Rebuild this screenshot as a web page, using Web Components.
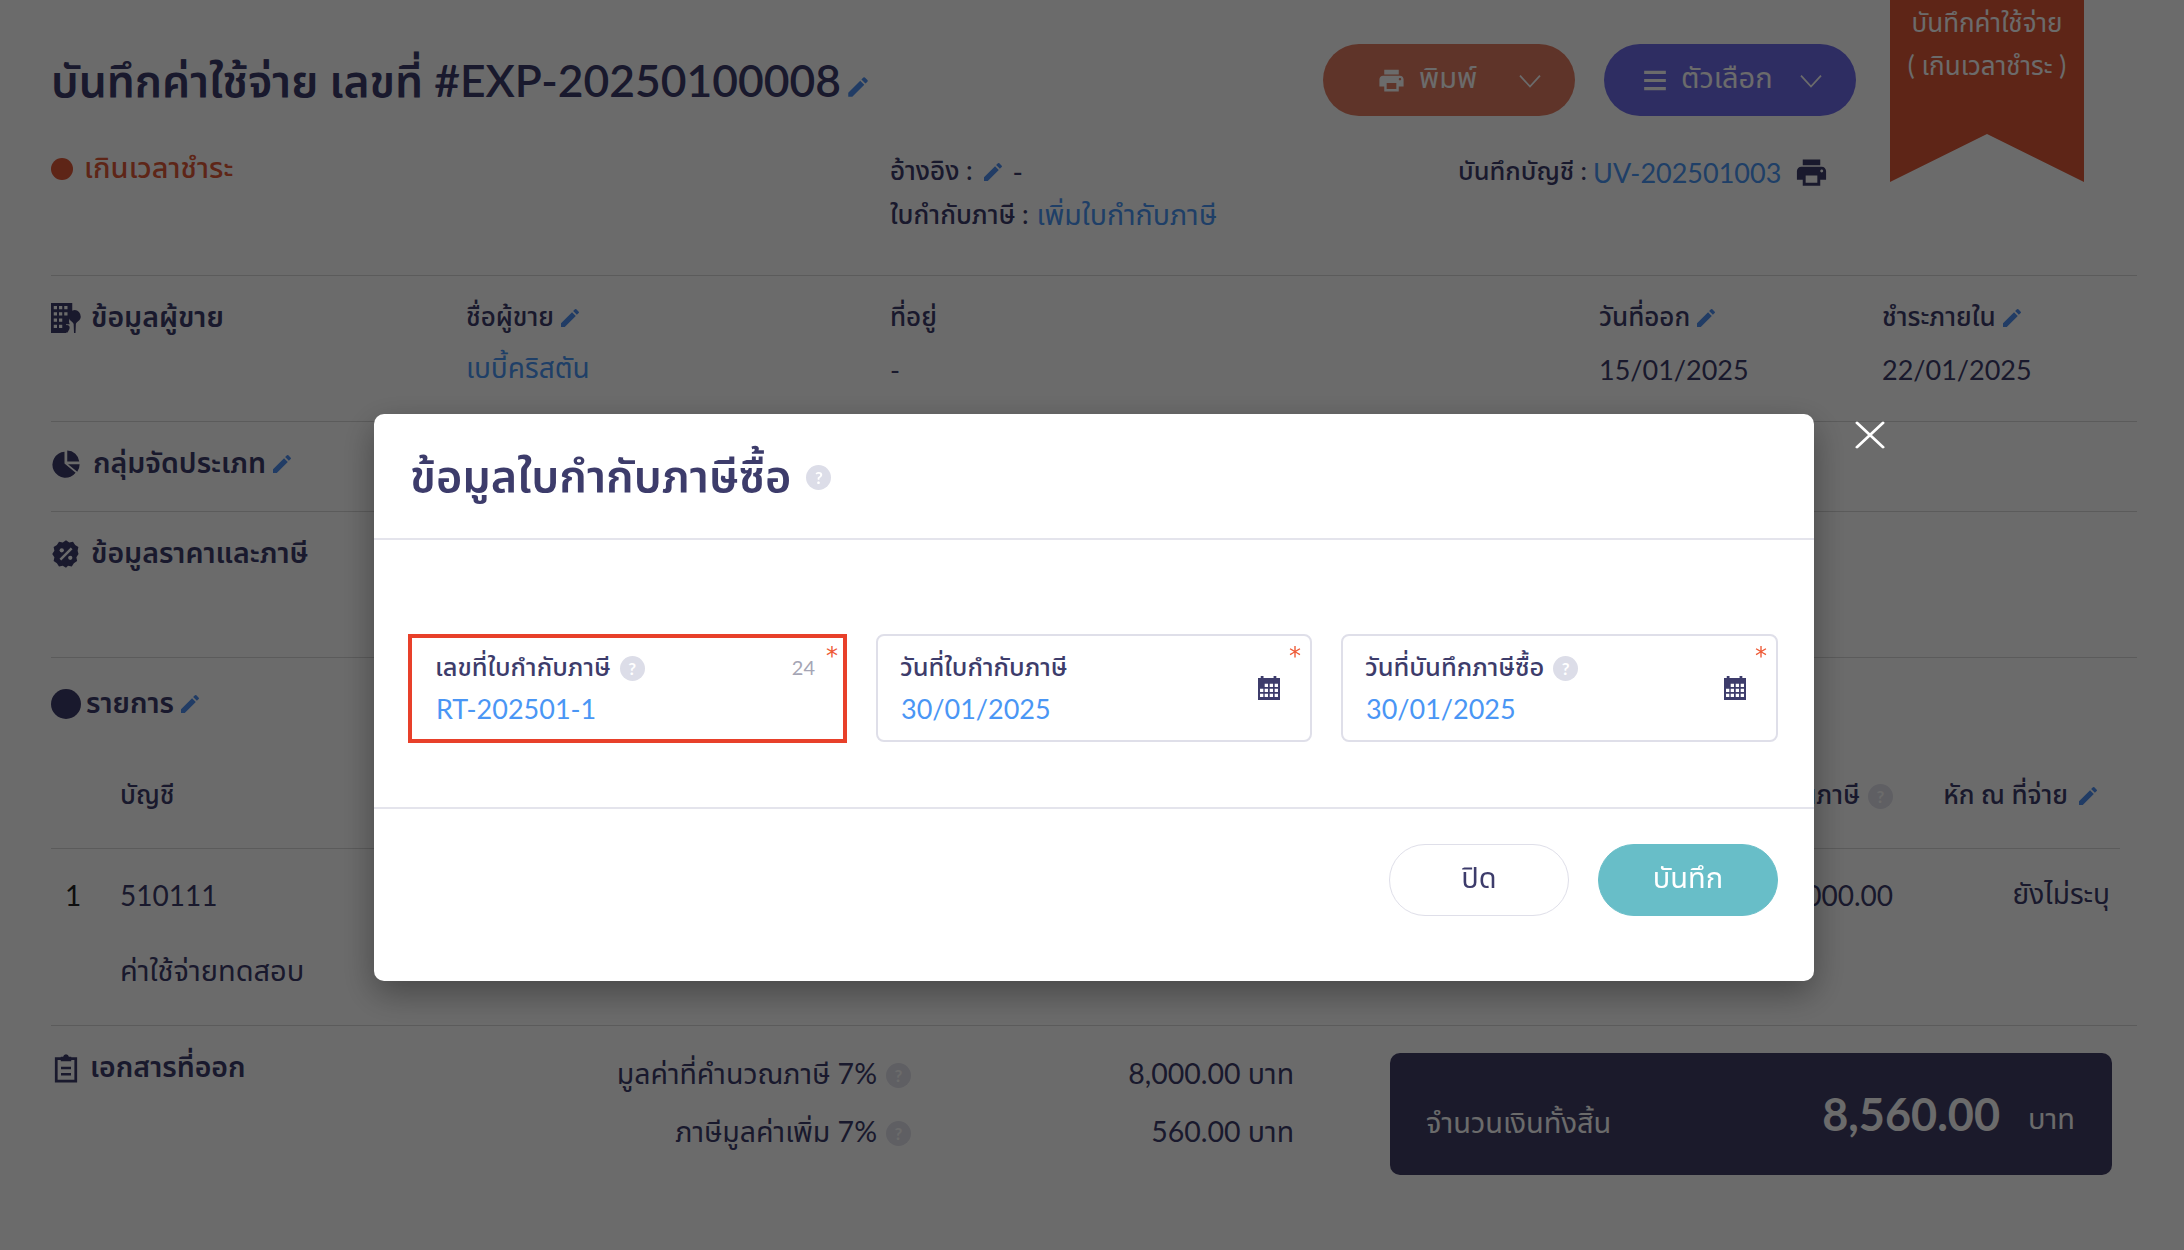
<!DOCTYPE html>
<html lang="th">
<head>
<meta charset="utf-8">
<title>บันทึกค่าใช้จ่าย</title>
<style>
  html, body { margin: 0; height: 100%; }
  body {
    background: #fff;
    color: #3d3c6b;
    font-family: Lato, "Noto Sans Thai", sans-serif;
    font-size: 28px;
    overflow: hidden;
  }
</style>
</head>
<body>
<expense-page></expense-page>
<tax-modal></tax-modal>

<script>
const ICONS = {
  pencil: '<path fill="currentColor" d="M3 17.25V21h3.75L17.8 9.94l-3.75-3.75L3 17.25zM20.7 7.04a1 1 0 0 0 0-1.41l-2.34-2.34a1 1 0 0 0-1.41 0l-1.83 1.83 3.75 3.75 1.83-1.83z"/>',
  print: '<path fill="currentColor" d="M19 8H5c-1.66 0-3 1.34-3 3v6h4v4h12v-4h4v-6c0-1.66-1.34-3-3-3zm-3 11H8v-5h8v5zm3-7c-.55 0-1-.45-1-1s.45-1 1-1 1 .45 1 1-.45 1-1 1zm-1-9H6v4h12V3z"/>',
  bars: '<path fill="currentColor" d="M2 4h20v2.6H2zM2 10.7h20v2.6H2zM2 17.4h20V20H2z"/>',
  chevron: '<path fill="none" stroke="currentColor" stroke-width="1.4" d="M4 8l8 9 8-9"/>',
  calendar: '<path fill="currentColor" d="M0 2h24v22H0zM3 0h3v2H3zM17 0h3v2h-3z"/><path fill="#fff" d="M7.3 7.7h3.6v3.4H7.3zM12.8 7.7h3.6v3.4h-3.6zM18.2 7.7h3.6v3.4h-3.6zM2.2 12.7h3.6v3.4H2.2zM7.3 12.7h3.6v3.4H7.3zM12.8 12.7h3.6v3.4h-3.6zM18.2 12.7h3.6v3.4h-3.6zM2.2 17.7h3.6v3.4H2.2zM7.3 17.7h3.6v3.4H7.3zM12.8 17.7h3.6v3.4h-3.6zM18.2 17.7h3.6v3.4h-3.6z"/>',
  pie: '<path fill="currentColor" d="M10.8 2.2A10.4 10.4 0 1 0 19.7 19l-8.9-7.4z"/><path fill="currentColor" d="M13 1.2V10h9.6A9.9 9.9 0 0 0 13 1.2zM13.6 12.2l7.4 6a10 10 0 0 0 1.9-6z"/>',
  percent: '<path fill="currentColor" d="M12 1l2.6 1.7 3-.6 1.7 2.6 2.6 1.7-.6 3L22 12l-1.7 2.6.6 3-2.6 1.7-1.7 2.6-3-.6L12 23l-2.6-1.7-3 .6-1.7-2.6-2.6-1.7.6-3L1 12l1.7-2.6-.6-3 2.6-1.7 1.7-2.6 3 .6z"/><path fill="none" stroke="#fff" stroke-width="2" d="M16.5 7.5l-9 9"/><circle cx="8.6" cy="9" r="1.7" fill="#fff"/><circle cx="15.4" cy="15" r="1.7" fill="#fff"/>',
  vendor: '<path fill="currentColor" d="M0 0h17v9.500a6 6 0 0 0-2 7.500H12v7H0z"/><path fill="#fff" d="M2.200 2.400h2.600V5H2.200zM6.400 2.400H9V5H6.400zM10.600 2.400h2.600V5h-2.600zM2.200 7.400h2.600V10H2.200zM6.400 7.400H9V10H6.400zM10.600 7.400h2.600V10h-2.600zM2.200 12.400h2.600V15H2.200zM6.400 12.400H9V15H6.400zM2.200 17.400h2.600V20H2.200zM6.400 17.400H9V20H6.400z"/><path fill="currentColor" d="M19 5.500a4.800 5.500 0 0 0-4.800 5.500c0 3 3.600 4.200 3.900 5.800l.3 7.200h1.200l.3-7.200c.3-1.600 3.900-2.800 3.900-5.800A4.800 5.500 0 0 0 19 5.500z"/><path fill="currentColor" d="M12.700 17.500a2.200 2.200 0 0 0-2.200 2.200c0 1.500 2.200 4.300 2.200 4.300s2.200-2.800 2.200-4.300a2.200 2.200 0 0 0-2.200-2.200z"/>',
  clipboard: '<path fill="none" stroke="currentColor" stroke-width="2.200" d="M8 4.500H4.200v18h15.600v-18H16"/><path fill="currentColor" d="M12 1a2.400 2.400 0 0 0-2.300 2H7.800v3.600h8.400V3h-1.900A2.400 2.400 0 0 0 12 1zM8 11h8v2H8zM8 16h8v2H8z"/>',
  dot: '<circle cx="12" cy="12" r="12" fill="currentColor"/>',
  close: '<path fill="none" stroke="currentColor" stroke-width="3" stroke-linecap="round" d="M2 2l26 26M28 2L2 28"/>'
};

class UiIcon extends HTMLElement {
  connectedCallback() {
    const name = this.getAttribute('name');
    const box = name === 'close' ? '0 0 30 30' : '0 0 24 24';
    this.attachShadow({mode: 'open'}).innerHTML = `
      <style>
        :host { display: inline-flex; flex: none; }
        svg { width: 100%; height: 100%; display: block; }
      </style>
      <svg viewBox="${box}" preserveAspectRatio="none">${ICONS[name]}</svg>`;
  }
}
customElements.define('ui-icon', UiIcon);

class EditPen extends HTMLElement {
  constructor() {
    super();
    this.attachShadow({mode: 'open'}).innerHTML = `
      <style>
        :host { display: inline-flex; width: 24px; height: 24px; color: #4f90f0; margin-left: 4px; flex: none; }
        ui-icon { width: 100%; height: 100%; }
      </style>
      <ui-icon name="pencil"></ui-icon>`;
  }
}
customElements.define('edit-pen', EditPen);

class HelpDot extends HTMLElement {
  constructor() {
    super();
    this.attachShadow({mode: 'open'}).innerHTML = `
      <style>
        :host {
          display: inline-flex; align-items: center; justify-content: center;
          width: 25px; height: 25px; border-radius: 50%; flex: none;
          background: var(--dot-bg, #dcdde8); color: #fff; font-size: 17px; font-weight: 700; line-height: 1;
        }
      </style>?`;
  }
}
customElements.define('help-dot', HelpDot);

class PillButton extends HTMLElement {
  constructor() {
    super();
    this.attachShadow({mode: 'open'}).innerHTML = `
      <style>
        :host {
          display: inline-flex; align-items: center; box-sizing: border-box;
          width: 252px; height: 72px; border-radius: 36px; color: #fff; font-size: 29px;
          padding: 0 30px 0 var(--lead-pad, 54px); gap: 13px;
        }
        .caret { width: 30px; height: 29px; margin-left: auto; }
        .lead { width: var(--lead-size, 29px); height: 29px; }
        .text { padding-bottom: 2px; }
      </style>
      <ui-icon class="lead" name="${this.getAttribute('icon')}"></ui-icon>
      <span class="text"><slot></slot></span>
      <ui-icon class="caret" name="chevron"></ui-icon>`;
  }
}
customElements.define('pill-button', PillButton);

class ExpenseRibbon extends HTMLElement {
  constructor() {
    super();
    this.attachShadow({mode: 'open'}).innerHTML = `
      <style>
        :host {
          position: absolute; top: 0; left: 1890px; width: 194px; height: 182px; padding-top: 1px; box-sizing: border-box;
          background: #e05837; color: #fff; font-size: 26px; line-height: 43px; text-align: center; white-space: nowrap;
          clip-path: polygon(0 0, 100% 0, 100% 100%, 50% 134px, 0 100%);
        }
      </style>
      <div>บันทึกค่าใช้จ่าย</div>
      <div>( เกินเวลาชำระ )</div>`;
  }
}
customElements.define('expense-ribbon', ExpenseRibbon);

class InfoCell extends HTMLElement {
  constructor() {
    super();
    this.attachShadow({mode: 'open'}).innerHTML = `
      <style>
        :host { display: flex; flex-direction: column; gap: 7px; }
        .label, .value { display: flex; align-items: center; height: 44px; white-space: nowrap; }
        .label { font-size: 26px; font-weight: 500; }
        .value { font-size: 27px; }
        .link { color: #4a96f5; font-size: 28px; }
      </style>
      <div class="label">${this.getAttribute('label')}${this.hasAttribute('edit') ? '<edit-pen></edit-pen>' : ''}</div>
      <div class="value ${this.hasAttribute('link') ? 'link' : ''}">${this.getAttribute('value')}</div>`;
  }
}
customElements.define('info-cell', InfoCell);

class SectionTitle extends HTMLElement {
  constructor() {
    super();
    this.attachShadow({mode: 'open'}).innerHTML = `
      <style>
        :host { display: flex; align-items: center; height: 44px; font-size: 28.5px; font-weight: 600; white-space: nowrap; }
        ui-icon { width: 30px; height: 30px; margin-right: var(--icon-gap, 10px); }
      </style>
      <ui-icon name="${this.getAttribute('icon')}"></ui-icon>
      <slot></slot>`;
  }
}
customElements.define('section-title', SectionTitle);

class TotalBox extends HTMLElement {
  constructor() {
    super();
    this.attachShadow({mode: 'open'}).innerHTML = `
      <style>
        :host {
          display: flex; align-items: center; box-sizing: border-box; width: 722px; height: 122px;
          padding: 0 37px 0 36px; border-radius: 10px; background: #403e67; color: #fff; font-size: 29px;
        }
        .label { flex: 1; padding-top: 20px; }
        .amount { font-size: 45px; font-weight: 700; margin-right: 28px; }
        .unit { padding-top: 12px; }
      </style>
      <span class="label">จำนวนเงินทั้งสิ้น</span>
      <span class="amount">8,560.00</span>
      <span class="unit">บาท</span>`;
  }
}
customElements.define('total-box', TotalBox);

class ExpensePage extends HTMLElement {
  constructor() {
    super();
    this.attachShadow({mode: 'open'}).innerHTML = `
      <style>
        :host { display: block; position: relative; height: 1250px; padding: 0 47px 0 51px; box-sizing: border-box; --dot-bg: #e2e2ec; }
        a { color: #4a96f5; text-decoration: none; }
        .band { border-bottom: 1px solid #d8d8d8; box-sizing: border-box; }
        .head { height: 276px; }
        .top { display: flex; align-items: center; height: 72px; padding-top: 44px; padding-right: 281px; }
        h1 { margin: 0; padding-top: 6px; font-size: 44.4px; font-weight: 600; white-space: nowrap; }
        .title-pen { width: 26px; height: 26px; margin-top: 14px; }
        .actions { margin-left: auto; display: flex; gap: 29px; }
        .print { background: #e27c62; }
        .opts { background: #6e6be9; --lead-pad: 38px; --lead-size: 26px; }
        .meta { display: grid; grid-template-columns: 839px 568px 1fr; margin-top: 34px; }
        .status { display: flex; align-items: center; gap: 11px; height: 38px; color: #e05837; font-size: 29px; font-weight: 500; }
        .status i { width: 22px; height: 22px; border-radius: 50%; background: #e05837; }
        .line { display: flex; align-items: center; height: 44px; font-size: 26px; font-weight: 500; white-space: nowrap; gap: 8px; }
        .line a { font-weight: 400; font-size: 28.5px; }
        .line a.code { font-size: 27px; }
        .line.account { gap: 6px; font-size: 25.5px; }
        .line .dash { font-weight: 400; font-size: 28px; }
        .line ui-icon { width: 35px; height: 35px; margin-left: 7px; }
        .vendor { height: 146px; padding-top: 20px; display: grid; grid-template-columns: 415px 424px 709px 283px 1fr; }
        .groups { height: 90px; padding-top: 20px; --icon-gap: 12px; }
        .price { height: 146px; padding-top: 20px; }
        .items { height: 368px; padding-top: 24px; --icon-gap: 5px; }
        .tcols { display: grid; grid-template-columns: 69px 1651px 122px 1fr; align-items: center; margin-right: 17px; }
        .thead { height: 62px; margin-top: 39px; font-size: 26px; font-weight: 500; border-bottom: 1px solid #d8d8d8; padding-bottom: 21px; box-sizing: content-box; }
        .thead > *, .tbody > * { display: flex; align-items: center; white-space: nowrap; }
        .end { justify-content: flex-end; gap: 8px; }
        .thead .last { margin-right: 20px; gap: 4px; }
        .tbody { margin-top: 24px; height: 44px; font-size: 28px; }
        .tbody .first { color: #222; padding-left: 14px; }
        .tbody .last { margin-right: 10px; }
        .desc { margin: 33px 0 0 69px; height: 44px; display: flex; align-items: center; font-size: 29px; }
        .doc { display: grid; grid-template-columns: 340px 903px 1fr; padding-top: 20px; --icon-gap: 9px; }
        .sum { display: grid; grid-template-columns: 1fr 34px 383px; grid-auto-rows: 58px; align-items: center; font-size: 28.5px; white-space: nowrap; }
        .sum span { text-align: right; }
        .sum help-dot { margin-left: 9px; }
        total-box { margin: 7px 0 0 96px; }
      </style>
      <expense-ribbon></expense-ribbon>
      <div class="band head">
        <div class="top">
          <h1>บันทึกค่าใช้จ่าย เลขที่ #EXP-20250100008</h1>
          <edit-pen class="title-pen"></edit-pen>
          <div class="actions">
            <pill-button class="print" icon="print">พิมพ์</pill-button>
            <pill-button class="opts" icon="bars">ตัวเลือก</pill-button>
          </div>
        </div>
        <div class="meta">
          <div class="status"><i></i>เกินเวลาชำระ</div>
          <div>
            <div class="line">อ้างอิง : <edit-pen style="margin-left:0"></edit-pen><span class="dash">-</span></div>
            <div class="line">ใบกำกับภาษี : <a>เพิ่มใบกำกับภาษี</a></div>
          </div>
          <div class="line account">บันทึกบัญชี : <a class="code">UV-202501003</a><ui-icon name="print"></ui-icon></div>
        </div>
      </div>
      <div class="band vendor">
        <section-title icon="vendor">ข้อมูลผู้ขาย</section-title>
        <info-cell label="ชื่อผู้ขาย" edit value="เบบี้คริสตัน" link></info-cell>
        <info-cell label="ที่อยู่" value="-"></info-cell>
        <info-cell label="วันที่ออก" edit value="15/01/2025"></info-cell>
        <info-cell label="ชำระภายใน" edit value="22/01/2025"></info-cell>
      </div>
      <div class="band groups"><section-title icon="pie">กลุ่มจัดประเภท<edit-pen></edit-pen></section-title></div>
      <div class="band price"><section-title icon="percent">ข้อมูลราคาและภาษี</section-title></div>
      <div class="band items">
        <section-title icon="dot">รายการ<edit-pen></edit-pen></section-title>
        <div class="tcols thead">
          <span></span><span>บัญชี</span>
          <span class="end">ก่อนภาษี<help-dot></help-dot></span>
          <span class="end last">หัก ณ ที่จ่าย<edit-pen></edit-pen></span>
        </div>
        <div class="tcols tbody">
          <span class="first">1</span><span>510111</span>
          <span class="end">8,000.00</span>
          <span class="end last">ยังไม่ระบุ</span>
        </div>
        <div class="desc">ค่าใช้จ่ายทดสอบ</div>
      </div>
      <div class="doc">
        <section-title icon="clipboard">เอกสารที่ออก</section-title>
        <div class="sum">
          <span>มูลค่าที่คำนวณภาษี 7%</span><help-dot></help-dot><span>8,000.00 บาท</span>
          <span>ภาษีมูลค่าเพิ่ม 7%</span><help-dot></help-dot><span>560.00 บาท</span>
        </div>
        <total-box></total-box>
      </div>`;
  }
}
customElements.define('expense-page', ExpensePage);

class TaxField extends HTMLElement {
  connectedCallback() {
    const help = this.hasAttribute('help') ? '<help-dot></help-dot>' : '';
    const side = this.hasAttribute('count')
      ? `<span class="count">${this.getAttribute('count')}</span>`
      : '<ui-icon class="cal" name="calendar"></ui-icon>';
    this.attachShadow({mode: 'open'}).innerHTML = `
      <style>
        :host {
          display: block; position: relative; box-sizing: border-box; height: 108px;
          padding: 14px 22px; border: 2px solid #dfdfe9; border-radius: 8px; background: #fff;
        }
        :host([error]) { border: 4px solid #e8402a; border-radius: 0; height: 109px; padding: 12px 23px; }
        .label { display: flex; align-items: center; gap: 9px; height: 36px; font-size: 25.5px; font-weight: 500; color: #3d3c6b; white-space: nowrap; }
        .value { height: 44px; display: flex; align-items: center; padding-left: 1px; font-size: 27px; color: #4a96f5; }
        .star { position: absolute; right: 9px; top: 6px; color: #ee5a36; font-size: 24px; line-height: 28px; font-family: "DejaVu Sans", sans-serif; }
        :host([error]) .star { right: 5px; top: 4px; }
        .count { position: absolute; right: 28px; top: 17px; color: #a5a5b5; font-size: 20px; }
        .cal { position: absolute; right: 30px; top: 40px; width: 22px; height: 24px; color: #3d3c6b; }
      </style>
      <span class="star">*</span>
      ${side}
      <div class="label">${this.getAttribute('label')}${help}</div>
      <div class="value">${this.getAttribute('value')}</div>`;
  }
}
customElements.define('tax-field', TaxField);

class TaxModal extends HTMLElement {
  constructor() {
    super();
    this.attachShadow({mode: 'open'}).innerHTML = `
      <style>
        :host {
          position: fixed; inset: 0; display: flex; justify-content: center; align-items: flex-start;
          padding: 414px 0 0 4px; box-sizing: border-box; background: rgba(0, 0, 0, .58);
        }
        .modal { position: relative; width: 1440px; height: 567px; background: #fff; border-radius: 10px; box-shadow: 0 12px 34px rgba(0, 0, 0, .35); }
        .close { position: absolute; left: 1481px; top: 7px; width: 30px; height: 28px; color: #fff; }
        header { display: flex; align-items: center; gap: 15px; height: 126px; padding: 3px 36px 0; border-bottom: 2px solid #e4e4ec; box-sizing: border-box; }
        h2 { margin: 0; font-size: 45px; font-weight: 600; color: #3d3c6b; }
        .fields { display: grid; grid-template-columns: 439px 436px 437px; gap: 29px; padding: 94px 36px 64px 34px; border-bottom: 2px solid #e4e4ec; }
        footer { display: flex; justify-content: flex-end; gap: 29px; padding: 35px 36px 0; }
        button {
          width: 180px; height: 72px; border-radius: 36px; font: inherit; font-size: 29px; padding: 0 0 2px;
          border: 1px solid #dfdfe9; background: #fff; color: #3d3c6b;
        }
        button.save { background: #68bec8; border-color: #68bec8; color: #fff; }
      </style>
      <div class="modal">
        <ui-icon class="close" name="close"></ui-icon>
        <header><h2>ข้อมูลใบกำกับภาษีซื้อ</h2><help-dot></help-dot></header>
        <div class="fields">
          <tax-field error label="เลขที่ใบกำกับภาษี" help value="RT-202501-1" count="24"></tax-field>
          <tax-field label="วันที่ใบกำกับภาษี" value="30/01/2025"></tax-field>
          <tax-field label="วันที่บันทึกภาษีซื้อ" help value="30/01/2025"></tax-field>
        </div>
        <footer><button>ปิด</button><button class="save">บันทึก</button></footer>
      </div>`;
  }
}
customElements.define('tax-modal', TaxModal);
</script>
</body>
</html>
